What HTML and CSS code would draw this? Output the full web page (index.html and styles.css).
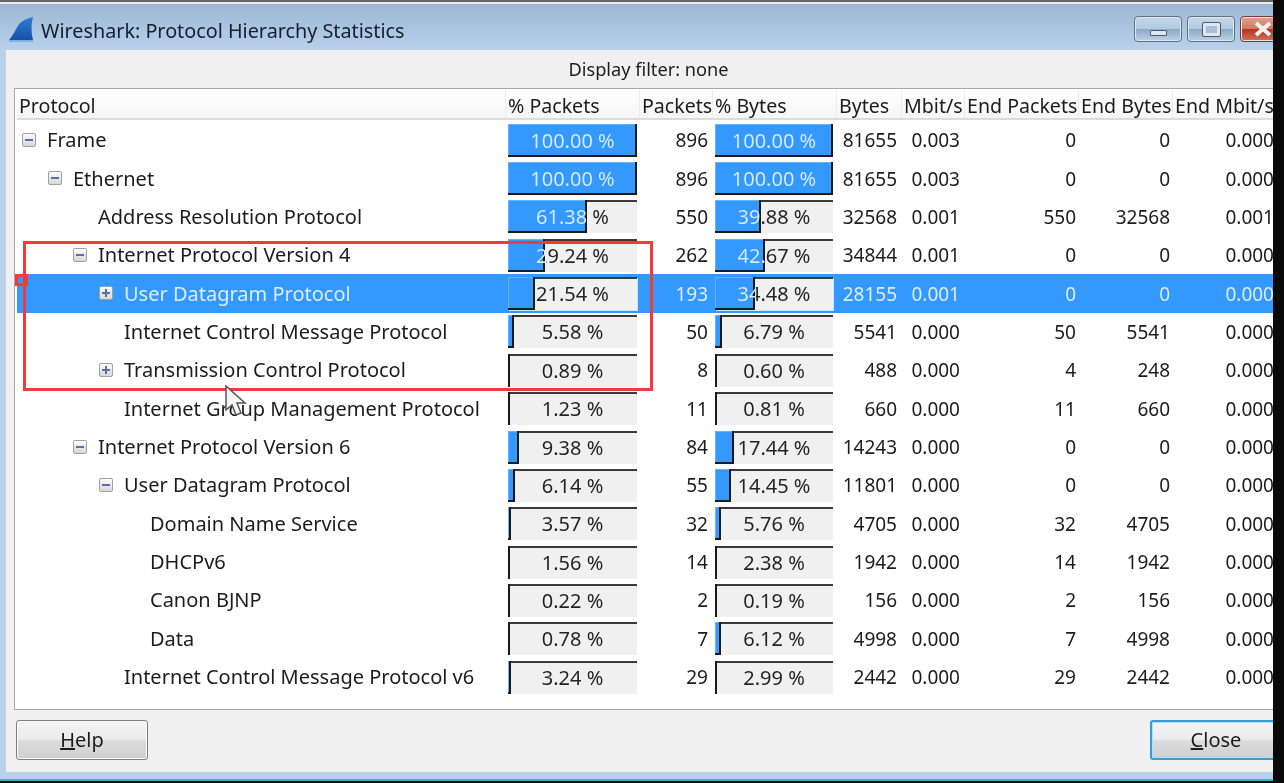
FILE: index.html
```html
<!DOCTYPE html>
<html lang="en">
<head>
    <meta charset="UTF-8">
    <meta name="viewport" content="width=device-width, initial-scale=1.0">
    <title>Wireshark: Protocol Hierarchy Statistics</title>
    <link rel="stylesheet" href="styles.css">
</head>
<body>

<div class="window">
    <div class="titlebar">
        <svg class="fin" width="25" height="26" viewBox="0 0 25 26">
            <defs>
                <linearGradient id="finFill" x1="0" y1="0" x2="0" y2="1">
                    <stop offset="0" stop-color="#2f7fd0"/>
                    <stop offset="1" stop-color="#1650a8"/>
                </linearGradient>
            </defs>
            <path d="M0 23 C4 19 7 11 11 6 C14 3 19 1 24 0 C22 7 22 16 24 23 Z" fill="url(#finFill)"/>
            <path d="M0 23 H24 V25 H0 Z" fill="#7fb2e0"/>
        </svg>
        <span class="title">Wireshark: Protocol Hierarchy Statistics</span>
        <div class="winbtns">
            <div class="winbtn"><span class="glyph-min"></span></div>
            <div class="winbtn"><span class="glyph-max"></span></div>
            <div class="winbtn winbtn-close">
                <svg width="22" height="16" viewBox="0 0 22 16"><path d="M3 2 L17 14 M17 2 L3 14" stroke="#f4f0ee" stroke-width="4"/></svg>
            </div>
        </div>
    </div>

    <div class="content">
        <div class="filter">Display filter: none</div>

        <div class="panel">
            <div class="row head">
                <div class="h">Protocol</div>
                <div class="h">% Packets</div>
                <div class="h">Packets</div>
                <div class="h">% Bytes</div>
                <div class="h">Bytes</div>
                <div class="h">Mbit/s</div>
                <div class="h">End Packets</div>
                <div class="h">End Bytes</div>
                <div class="h">End Mbit/s</div>
            </div>

            <div class="row">
                <div class="name lvl0"><span class="exp minus"></span>Frame</div>
                <div class="pc"><div class="bar" style="--p:100%"><i></i><span>100.00 %</span></div></div>
                <div class="num">896</div>
                <div class="bc"><div class="bar" style="--p:100%"><i></i><span>100.00 %</span></div></div>
                <div class="num">81655</div><div class="num">0.003</div><div class="num">0</div><div class="num">0</div><div class="num">0.000</div>
            </div>
            <div class="row">
                <div class="name lvl1"><span class="exp minus"></span>Ethernet</div>
                <div class="pc"><div class="bar" style="--p:100%"><i></i><span>100.00 %</span></div></div>
                <div class="num">896</div>
                <div class="bc"><div class="bar" style="--p:100%"><i></i><span>100.00 %</span></div></div>
                <div class="num">81655</div><div class="num">0.003</div><div class="num">0</div><div class="num">0</div><div class="num">0.000</div>
            </div>
            <div class="row">
                <div class="name lvl2"><span class="exp none"></span>Address Resolution Protocol</div>
                <div class="pc"><div class="bar" style="--p:61.38%"><i></i><span>61.38 %</span></div></div>
                <div class="num">550</div>
                <div class="bc"><div class="bar" style="--p:39.88%"><i></i><span>39.88 %</span></div></div>
                <div class="num">32568</div><div class="num">0.001</div><div class="num">550</div><div class="num">32568</div><div class="num">0.001</div>
            </div>
            <div class="row">
                <div class="name lvl2"><span class="exp minus"></span>Internet Protocol Version 4</div>
                <div class="pc"><div class="bar" style="--p:29.24%"><i></i><span>29.24 %</span></div></div>
                <div class="num">262</div>
                <div class="bc"><div class="bar" style="--p:42.67%"><i></i><span>42.67 %</span></div></div>
                <div class="num">34844</div><div class="num">0.001</div><div class="num">0</div><div class="num">0</div><div class="num">0.000</div>
            </div>
            <div class="row selected">
                <div class="name lvl3"><span class="exp plus"></span>User Datagram Protocol</div>
                <div class="pc"><div class="bar" style="--p:21.54%"><i></i><span>21.54 %</span></div></div>
                <div class="num">193</div>
                <div class="bc"><div class="bar" style="--p:34.48%"><i></i><span>34.48 %</span></div></div>
                <div class="num">28155</div><div class="num">0.001</div><div class="num">0</div><div class="num">0</div><div class="num">0.000</div>
            </div>
            <div class="row">
                <div class="name lvl3"><span class="exp none"></span>Internet Control Message Protocol</div>
                <div class="pc"><div class="bar" style="--p:5.58%"><i></i><span>5.58 %</span></div></div>
                <div class="num">50</div>
                <div class="bc"><div class="bar" style="--p:6.79%"><i></i><span>6.79 %</span></div></div>
                <div class="num">5541</div><div class="num">0.000</div><div class="num">50</div><div class="num">5541</div><div class="num">0.000</div>
            </div>
            <div class="row">
                <div class="name lvl3"><span class="exp plus"></span>Transmission Control Protocol</div>
                <div class="pc"><div class="bar" style="--p:0.89%"><i></i><span>0.89 %</span></div></div>
                <div class="num">8</div>
                <div class="bc"><div class="bar" style="--p:0.60%"><i></i><span>0.60 %</span></div></div>
                <div class="num">488</div><div class="num">0.000</div><div class="num">4</div><div class="num">248</div><div class="num">0.000</div>
            </div>
            <div class="row">
                <div class="name lvl3"><span class="exp none"></span>Internet Group Management Protocol</div>
                <div class="pc"><div class="bar" style="--p:1.23%"><i></i><span>1.23 %</span></div></div>
                <div class="num">11</div>
                <div class="bc"><div class="bar" style="--p:0.81%"><i></i><span>0.81 %</span></div></div>
                <div class="num">660</div><div class="num">0.000</div><div class="num">11</div><div class="num">660</div><div class="num">0.000</div>
            </div>
            <div class="row">
                <div class="name lvl2"><span class="exp minus"></span>Internet Protocol Version 6</div>
                <div class="pc"><div class="bar" style="--p:9.38%"><i></i><span>9.38 %</span></div></div>
                <div class="num">84</div>
                <div class="bc"><div class="bar" style="--p:17.44%"><i></i><span>17.44 %</span></div></div>
                <div class="num">14243</div><div class="num">0.000</div><div class="num">0</div><div class="num">0</div><div class="num">0.000</div>
            </div>
            <div class="row">
                <div class="name lvl3"><span class="exp minus"></span>User Datagram Protocol</div>
                <div class="pc"><div class="bar" style="--p:6.14%"><i></i><span>6.14 %</span></div></div>
                <div class="num">55</div>
                <div class="bc"><div class="bar" style="--p:14.45%"><i></i><span>14.45 %</span></div></div>
                <div class="num">11801</div><div class="num">0.000</div><div class="num">0</div><div class="num">0</div><div class="num">0.000</div>
            </div>
            <div class="row">
                <div class="name lvl4"><span class="exp none"></span>Domain Name Service</div>
                <div class="pc"><div class="bar" style="--p:3.57%"><i></i><span>3.57 %</span></div></div>
                <div class="num">32</div>
                <div class="bc"><div class="bar" style="--p:5.76%"><i></i><span>5.76 %</span></div></div>
                <div class="num">4705</div><div class="num">0.000</div><div class="num">32</div><div class="num">4705</div><div class="num">0.000</div>
            </div>
            <div class="row">
                <div class="name lvl4"><span class="exp none"></span>DHCPv6</div>
                <div class="pc"><div class="bar" style="--p:1.56%"><i></i><span>1.56 %</span></div></div>
                <div class="num">14</div>
                <div class="bc"><div class="bar" style="--p:2.38%"><i></i><span>2.38 %</span></div></div>
                <div class="num">1942</div><div class="num">0.000</div><div class="num">14</div><div class="num">1942</div><div class="num">0.000</div>
            </div>
            <div class="row">
                <div class="name lvl4"><span class="exp none"></span>Canon BJNP</div>
                <div class="pc"><div class="bar" style="--p:0.22%"><i></i><span>0.22 %</span></div></div>
                <div class="num">2</div>
                <div class="bc"><div class="bar" style="--p:0.19%"><i></i><span>0.19 %</span></div></div>
                <div class="num">156</div><div class="num">0.000</div><div class="num">2</div><div class="num">156</div><div class="num">0.000</div>
            </div>
            <div class="row">
                <div class="name lvl4"><span class="exp none"></span>Data</div>
                <div class="pc"><div class="bar" style="--p:0.78%"><i></i><span>0.78 %</span></div></div>
                <div class="num">7</div>
                <div class="bc"><div class="bar" style="--p:6.12%"><i></i><span>6.12 %</span></div></div>
                <div class="num">4998</div><div class="num">0.000</div><div class="num">7</div><div class="num">4998</div><div class="num">0.000</div>
            </div>
            <div class="row">
                <div class="name lvl3"><span class="exp none"></span>Internet Control Message Protocol v6</div>
                <div class="pc"><div class="bar" style="--p:3.24%"><i></i><span>3.24 %</span></div></div>
                <div class="num">29</div>
                <div class="bc"><div class="bar" style="--p:2.99%"><i></i><span>2.99 %</span></div></div>
                <div class="num">2442</div><div class="num">0.000</div><div class="num">29</div><div class="num">2442</div><div class="num">0.000</div>
            </div>
        </div>

        <div class="buttons">
            <button class="btn"><u>H</u>elp</button>
            <button class="btn btn-default"><u>C</u>lose</button>
        </div>
    </div>

    <!-- annotation drawn on top of the screenshot -->
    <div class="mark"></div>
    <div class="mark-dot"></div>
    <svg class="cursor" width="26" height="32" viewBox="0 0 26 32">
        <path d="M2 1 V25 L8 20 L12 30 L17 28 L13 18 L21 18 Z" fill="#f4f4f4" stroke="#555" stroke-width="1.5"/>
    </svg>
</div>

</body>
</html>
```

FILE: styles.css
```css
html, body {
    margin: 0;
    height: 100%;
    background: #0a0a0a;
    overflow: hidden;
}

body {
    font-family: "Noto Sans", sans-serif;
    font-size: 20px;
    color: #1c1c1c;
}

.window {
    position: relative;
    width: 1273px;
    height: 779px;
    display: flex;
    flex-direction: column;
    overflow: hidden;
    background: #b9d1ea;
    border-bottom: 2px solid #35b5d6;
    filter: blur(0.4px);
}

.titlebar {
    height: 46px;
    flex: none;
    display: flex;
    align-items: center;
    border-top: 2px solid #666;
    padding-top: 2px;
    background: linear-gradient(#9bb6d4, #b9d1ea);
    background-clip: content-box;
    box-shadow: inset 0 2px 0 #e8e8e8;
}

.fin {
    margin: 6px 7px 0 9px;
    flex: none;
}

.title {
    margin-top: 7px;
    font-size: 19.8px;
    color: #14202c;
}

.winbtns {
    margin-left: auto;
    margin-right: -15px;
    margin-top: 12px;
    display: flex;
    gap: 5px;
    align-self: flex-start;
}

.winbtn {
    width: 48px;
    height: 26px;
    box-sizing: border-box;
    border: 1px solid #5f7085;
    border-radius: 4px;
    background: linear-gradient(#c6d8ea 0, #b2c9e0 48%, #8ba9c8 52%, #bcd2e8 100%);
    box-shadow: inset 0 0 0 1px #dbe7f3;
    display: flex;
    align-items: center;
    justify-content: center;
}

.winbtn-close {
    background: linear-gradient(#e0a090 0, #cf7a62 48%, #b5351f 52%, #d4705a 100%);
    border-color: #7a3a30;
    justify-content: flex-start;
    padding-left: 12px;
}

.glyph-min {
    width: 17px;
    height: 6px;
    margin-top: 7px;
    box-sizing: border-box;
    background: #dfe6ee;
    border: 1px solid #4d5a6a;
    border-radius: 1px;
}

.glyph-max {
    width: 17px;
    height: 13px;
    box-sizing: border-box;
    background: #a9bfd6;
    border: 3px solid #dfe6ee;
    outline: 1px solid #4d5a6a;
    border-radius: 1px;
}

.content {
    flex: 1;
    margin: 0 0 7px 6px;
    background: #f0f0f0;
    display: flex;
    flex-direction: column;
    min-height: 0;
}

.filter {
    height: 38px;
    flex: none;
    display: flex;
    align-items: center;
    justify-content: center;
    font-size: 18.2px;
    padding-left: 18px;
    box-sizing: border-box;
}

.panel {
    height: 622px;
    flex: none;
    margin-left: 8px;
    border: 1px solid #a8a8a8;
    border-right: none;
    background: #fff;
    padding: 1px 0 0 2px;
    box-sizing: border-box;
    overflow: hidden;
}

.row {
    display: grid;
    grid-template-columns: 489px 134px 73px 124px 65px 63px 114px 94px 106px;
    height: 38.36px;
    align-items: center;
    width: 1262px;
}

.head {
    height: 30px;
    margin-bottom: 1px;
    background: linear-gradient(#fff, #f6f6f6);
    border-bottom: 2px solid #dcdcdc;
    box-sizing: border-box;
    align-items: stretch;
}

.h {
    padding-left: 2px;
    padding-top: 2px;
    border-right: 1px solid #ebebeb;
    line-height: 27px;
    white-space: nowrap;
    overflow: hidden;
    font-size: 19.6px;
}

.name {
    display: flex;
    align-items: center;
    white-space: nowrap;
    padding-bottom: 1px;
}

.lvl0 { padding-left: 5px; }
.lvl1 { padding-left: 31px; }
.lvl2 { padding-left: 56px; }
.lvl3 { padding-left: 82px; }
.lvl4 { padding-left: 108px; }

.exp {
    position: relative;
    width: 14px;
    height: 14px;
    margin-right: 11px;
    flex: none;
    box-sizing: border-box;
}

.minus, .plus {
    border: 1px solid #a0a0a0;
    border-radius: 2px;
    background: linear-gradient(#fbfbfb, #d8d8d8);
}

.minus::before, .plus::before {
    content: "";
    position: absolute;
    left: 2px;
    right: 2px;
    top: 5px;
    height: 2px;
    background: #5a6ea8;
}

.plus::after {
    content: "";
    position: absolute;
    top: 2px;
    bottom: 2px;
    left: 5px;
    width: 2px;
    background: #5a6ea8;
}

.num {
    text-align: right;
    padding-right: 5px;
    font-size: 19px;
}

.num:nth-child(7), .num:nth-child(8) {
    padding-right: 3px;
}

.pc { padding-left: 2px; }
.bc { padding-left: 2px; }

.bar {
    position: relative;
    height: 33px;
    box-sizing: border-box;
    background: #f0f0f0;
    border-top: 2px solid #3a3a3a;
    text-align: center;
    line-height: 29px;
}

.pc .bar { width: 129px; }
.bc .bar { width: 118px; }

.bar i {
    position: absolute;
    left: 0;
    top: -2px;
    bottom: 0;
    width: calc(var(--p) * 1.01 - 1.3px);
    min-width: 2px;
    box-sizing: border-box;
    background: #3399ff;
    border-right: 2px solid #1a1a1a;
    border-bottom: 2px solid #1a1a1a;
    box-shadow: inset 1px 1px 0 #66b2ff;
}

.bar span {
    position: relative;
    display: block;
    color: transparent;
    background: linear-gradient(90deg, #dcecff var(--p), #222 var(--p));
    -webkit-background-clip: text;
    background-clip: text;
}

.selected {
    background: #3399ff;
    color: #dcecff;
}

.selected .bar {
    box-shadow: 1px 1px 0 #cfe5ff;
}

.buttons {
    display: flex;
    justify-content: space-between;
    margin: 10px 0 0 10px;
}

.btn {
    width: 132px;
    height: 40px;
    flex: none;
    font: inherit;
    line-height: 36px;
    color: #1c1c1c;
    border: 1px solid #7f7f7f;
    border-radius: 3px;
    background: linear-gradient(#f3f3f3 0, #ececec 48%, #dcdcdc 52%, #cfcfcf 100%);
    box-shadow: inset 0 0 0 1px #fbfbfb;
    padding: 0;
}

.btn-default {
    margin-right: -9px;
    border: 2px solid #3c9ad4;
    box-shadow: inset 0 0 0 1px #a8e4f5;
}

.mark {
    position: absolute;
    left: 23px;
    top: 241px;
    width: 630px;
    height: 150px;
    box-sizing: border-box;
    border: 3px solid #f33a3a;
}

.mark-dot {
    position: absolute;
    left: 15px;
    top: 274px;
    width: 13px;
    height: 12px;
    box-sizing: border-box;
    border: 3px solid #f33a3a;
}

.cursor {
    position: absolute;
    left: 224px;
    top: 385px;
}
```
